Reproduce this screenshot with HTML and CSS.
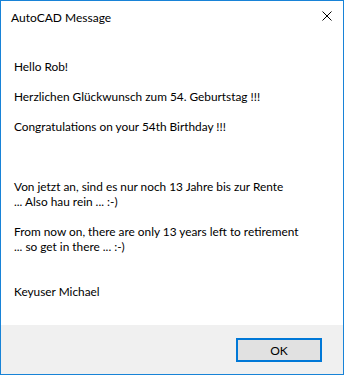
FILE: index.html
```html
<!DOCTYPE html>
<html lang="de">
<head>
  <meta charset="UTF-8" />
  <title>AutoCAD Message</title>
  <link rel="stylesheet" href="styles.css">
</head>
<body>

  <div class="window">
    <div class="titlebar">
      <div class="title">AutoCAD Message</div>
      <button class="close" title="Close">
        <svg width="10" height="10" viewBox="0 0 10 10">
          <path d="M0.5 0.5 L9.5 9.5 M9.5 0.5 L0.5 9.5" stroke="#000" stroke-width="1" fill="none" />
        </svg>
      </button>
    </div>

    <div class="message">Hello Rob!

Herzlichen Glückwunsch zum 54. Geburtstag !!!

Congratulations on your 54th Birthday !!!



Von jetzt an, sind es nur noch 13 Jahre bis zur Rente
... Also hau rein ... :-)

From now on, there are only 13 years left to retirement
... so get in there ... :-)


Keyuser Michael</div>

    <div class="footer">
      <button class="ok">OK</button>
    </div>
  </div>

</body>
</html>
```

FILE: styles.css
```css
body {
  margin: 0;
  font-family: Lato, 'Liberation Sans', sans-serif;
  font-size: 12px;
  color: #000;
}

.window {
  width: 344px;
  height: 375px;
  box-sizing: border-box;
  border: 1px solid #1883d7;
  display: flex;
  flex-direction: column;
  background-color: #fff;
}

.titlebar {
  height: 30px;
  display: flex;
  align-items: center;
  justify-content: space-between;
  padding-left: 10px;
}

.title {
  font-size: 12px;
  padding-top: 2px;
}

.close {
  width: 32px;
  height: 30px;
  border: none;
  background: none;
  padding: 0;
  display: flex;
  align-items: center;
  justify-content: center;
}

.message {
  flex: 1;
  white-space: pre-line;
  line-height: 15px;
  padding: 28px 13px 0;
  font-size: 11.85px;
}

.footer {
  height: 49px;
  background-color: #f0f0f0;
  display: flex;
  align-items: flex-start;
  justify-content: flex-end;
  padding: 13px 21px 0 0;
  box-sizing: border-box;
}

.ok {
  width: 86px;
  height: 24px;
  box-sizing: border-box;
  border: 2px solid #0078d7;
  background-color: #e1e1e1;
  font-family: Lato, 'Liberation Sans', sans-serif;
  font-size: 12px;
  color: #000;
  padding: 0;
}
```
